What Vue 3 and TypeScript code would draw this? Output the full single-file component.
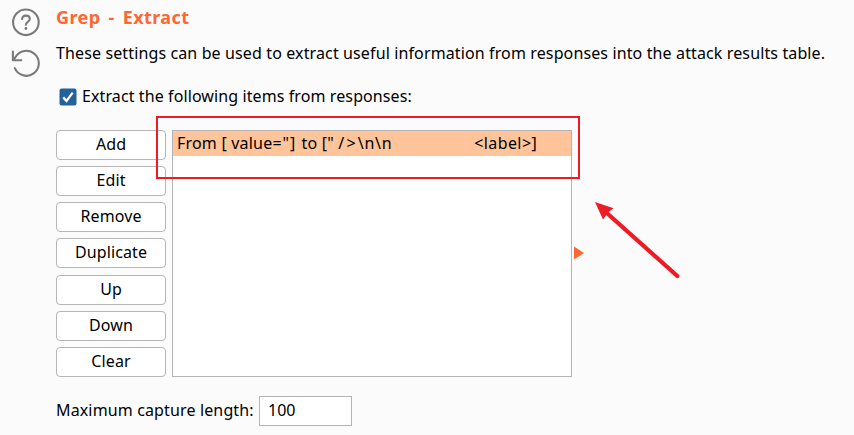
<script setup lang="ts">
import { ref } from 'vue'

interface Action {
  label: string
  key: string
}

interface Segment {
  text: string
  kind: string
}

const actions: Action[] = [
  { label: 'Add', key: 'add' },
  { label: 'Edit', key: 'edit' },
  { label: 'Remove', key: 'remove' },
  { label: 'Duplicate', key: 'duplicate' },
  { label: 'Up', key: 'up' },
  { label: 'Down', key: 'down' },
  { label: 'Clear', key: 'clear' },
]

const enabled = ref(true)
const maxLength = ref('100')
const items = ref<Segment[][]>([
  [
    { text: 'From [ value', kind: 'words' },
    { text: '="] ', kind: 'symbols' },
    { text: 'to [" ', kind: 'words' },
    { text: '/>', kind: 'tag' },
    { text: '\\n\\n', kind: 'escape' },
    { text: ' '.repeat(16), kind: 'gap' },
    { text: '<label>]', kind: 'end' },
  ],
])
</script>

<template>
  <main class="panel">
    <aside class="tools">
      <svg class="tool" width="30" height="30" viewBox="0 0 30 30">
        <circle cx="14.9" cy="15.3" r="12.8" />
        <path d="M11.1 12.1C11.1 9.8 12.6 8.6 14.9 8.6S18.8 9.9 18.8 12C18.8 14.6 14.9 15 14.9 17.7" />
        <circle class="dot" cx="14.9" cy="21.5" r="1.4" />
      </svg>
      <svg class="tool" width="30" height="30" viewBox="0 0 30 30">
        <path d="M3.8 21.2A12.5 12.5 0 1 0 4.4 10.2L2.4 13M1.9 4.5V13.3H10.3" />
      </svg>
    </aside>
    <section class="content">
      <h1 class="title">Grep - Extract</h1>
      <p class="description">These settings can be used to extract useful information from responses into the attack results table.</p>
      <label class="toggle">
        <input v-model="enabled" class="native" type="checkbox" />
        <svg class="box" width="18" height="18" viewBox="0 0 18 18">
          <rect x="0.5" y="0.5" width="17" height="17" rx="2" />
          <path v-if="enabled" d="M4.2 9.4L7.5 13L13.7 4.6" />
        </svg>
        <span class="toggle-text">Extract the following items from responses:</span>
      </label>
      <div class="editor">
        <div class="actions">
          <button v-for="a in actions" :key="a.key" class="action" type="button">{{ a.label }}</button>
        </div>
        <div class="list">
          <div v-for="(item, i) in items" :key="i" class="row"><span v-for="(s, j) in item" :key="j" :class="s.kind">{{ s.text }}</span></div>
        </div>
        <svg class="expander" width="10" height="14" viewBox="0 0 10 14"><path d="M0 0.5L10 7L0 13.5Z" /></svg>
        <div class="highlight"></div>
      </div>
      <div class="field">
        <label class="field-label" for="max">Maximum capture length:</label>
        <input id="max" v-model="maxLength" class="field-input" type="text" />
      </div>
    </section>
    <svg class="pointer" width="90" height="80" viewBox="0 0 90 80">
      <path class="shaft" d="M9 8.5L82.3 74" />
      <path class="head" d="M0 0L18.5 6.2L13 10.5L8 17.5Z" />
    </svg>
  </main>
</template>

<style>
body {
  margin: 0;
  background: #fbfbfb;
}
</style>

<style scoped>
.panel {
  position: relative;
  box-sizing: border-box;
  width: 854px;
  height: 435px;
  overflow: hidden;
  display: flex;
  background: #fbfbfb;
  color: #000;
  font: 16px/24px "Noto Sans", "Open Sans", sans-serif;
}
.tools {
  width: 56px;
  flex: none;
  box-sizing: border-box;
  padding: 7px 0 0 11px;
  display: flex;
  flex-direction: column;
  gap: 10px;
}
.tool {
  fill: none;
  stroke: #7a7a7a;
  stroke-width: 2.1;
  stroke-linecap: round;
  stroke-linejoin: round;
}
.dot {
  fill: #7a7a7a;
  stroke: none;
}
.content {
  flex: none;
  width: 798px;
}
.title {
  margin: 5px 0 0;
  font-size: 18px;
  line-height: 24px;
  font-weight: 700;
  letter-spacing: 0.4px;
  word-spacing: 3px;
  color: #ff6633;
}
.description {
  margin: 12px 0 0;
  white-space: nowrap;
  letter-spacing: 0.125px;
}
.toggle {
  display: flex;
  align-items: center;
  margin-top: 20px;
  padding-left: 3px;
  height: 24px;
}
.toggle-text {
  padding-bottom: 2px;
  letter-spacing: 0.1px;
}
.native {
  position: absolute;
  opacity: 0;
}
.box {
  margin-right: 5px;
  fill: #24629c;
}
.box path {
  fill: none;
  stroke: #fff;
  stroke-width: 2.3;
}
.editor {
  position: relative;
  display: flex;
  align-items: center;
  height: 247px;
  margin-top: 21px;
}
.actions {
  display: grid;
  grid-template-rows: repeat(7, 30px);
  align-content: space-between;
  width: 110px;
  height: 247px;
  margin-right: 6px;
}
.action {
  box-sizing: border-box;
  padding: 0 0 2px;
  border: 1px solid #b9b4b6;
  border-radius: 4px;
  background: #fff;
  color: inherit;
  font: inherit;
  line-height: 24px;
  letter-spacing: 0.1px;
}
.list {
  box-sizing: border-box;
  width: 400px;
  height: 247px;
  border: 1px solid #b5b3b4;
  background: #fff;
}
.row {
  height: 25px;
  padding-left: 4px;
  line-height: 25px;
  white-space: pre;
  background: #ffc499;
}
.words {
  letter-spacing: 0.2px;
}
.symbols {
  letter-spacing: 1px;
}
.tag {
  letter-spacing: 2.2px;
}
.escape {
  letter-spacing: 0.75px;
}
.gap {
  word-spacing: 0.95px;
}
.end {
  letter-spacing: 0.4px;
}
.expander {
  margin: 0 0 1px 2px;
  fill: #ff6633;
}
.highlight {
  position: absolute;
  left: 100px;
  top: -14px;
  box-sizing: border-box;
  width: 424px;
  height: 63px;
  border: 2px solid #ed1c24;
}
.field {
  display: flex;
  align-items: center;
  margin-top: 19px;
}
.field-label {
  width: 203px;
  padding-bottom: 2px;
  white-space: nowrap;
  letter-spacing: 0.14px;
}
.field-input {
  box-sizing: border-box;
  width: 93px;
  height: 30px;
  padding: 0 8px 2px;
  border: 1px solid #b5b3b4;
  background: #fff;
  color: inherit;
  font: inherit;
}
.pointer {
  position: absolute;
  left: 595px;
  top: 202px;
}
.shaft {
  stroke: #ed1c24;
  stroke-width: 4.2;
  stroke-linecap: round;
}
.head {
  fill: #ed1c24;
}
</style>
